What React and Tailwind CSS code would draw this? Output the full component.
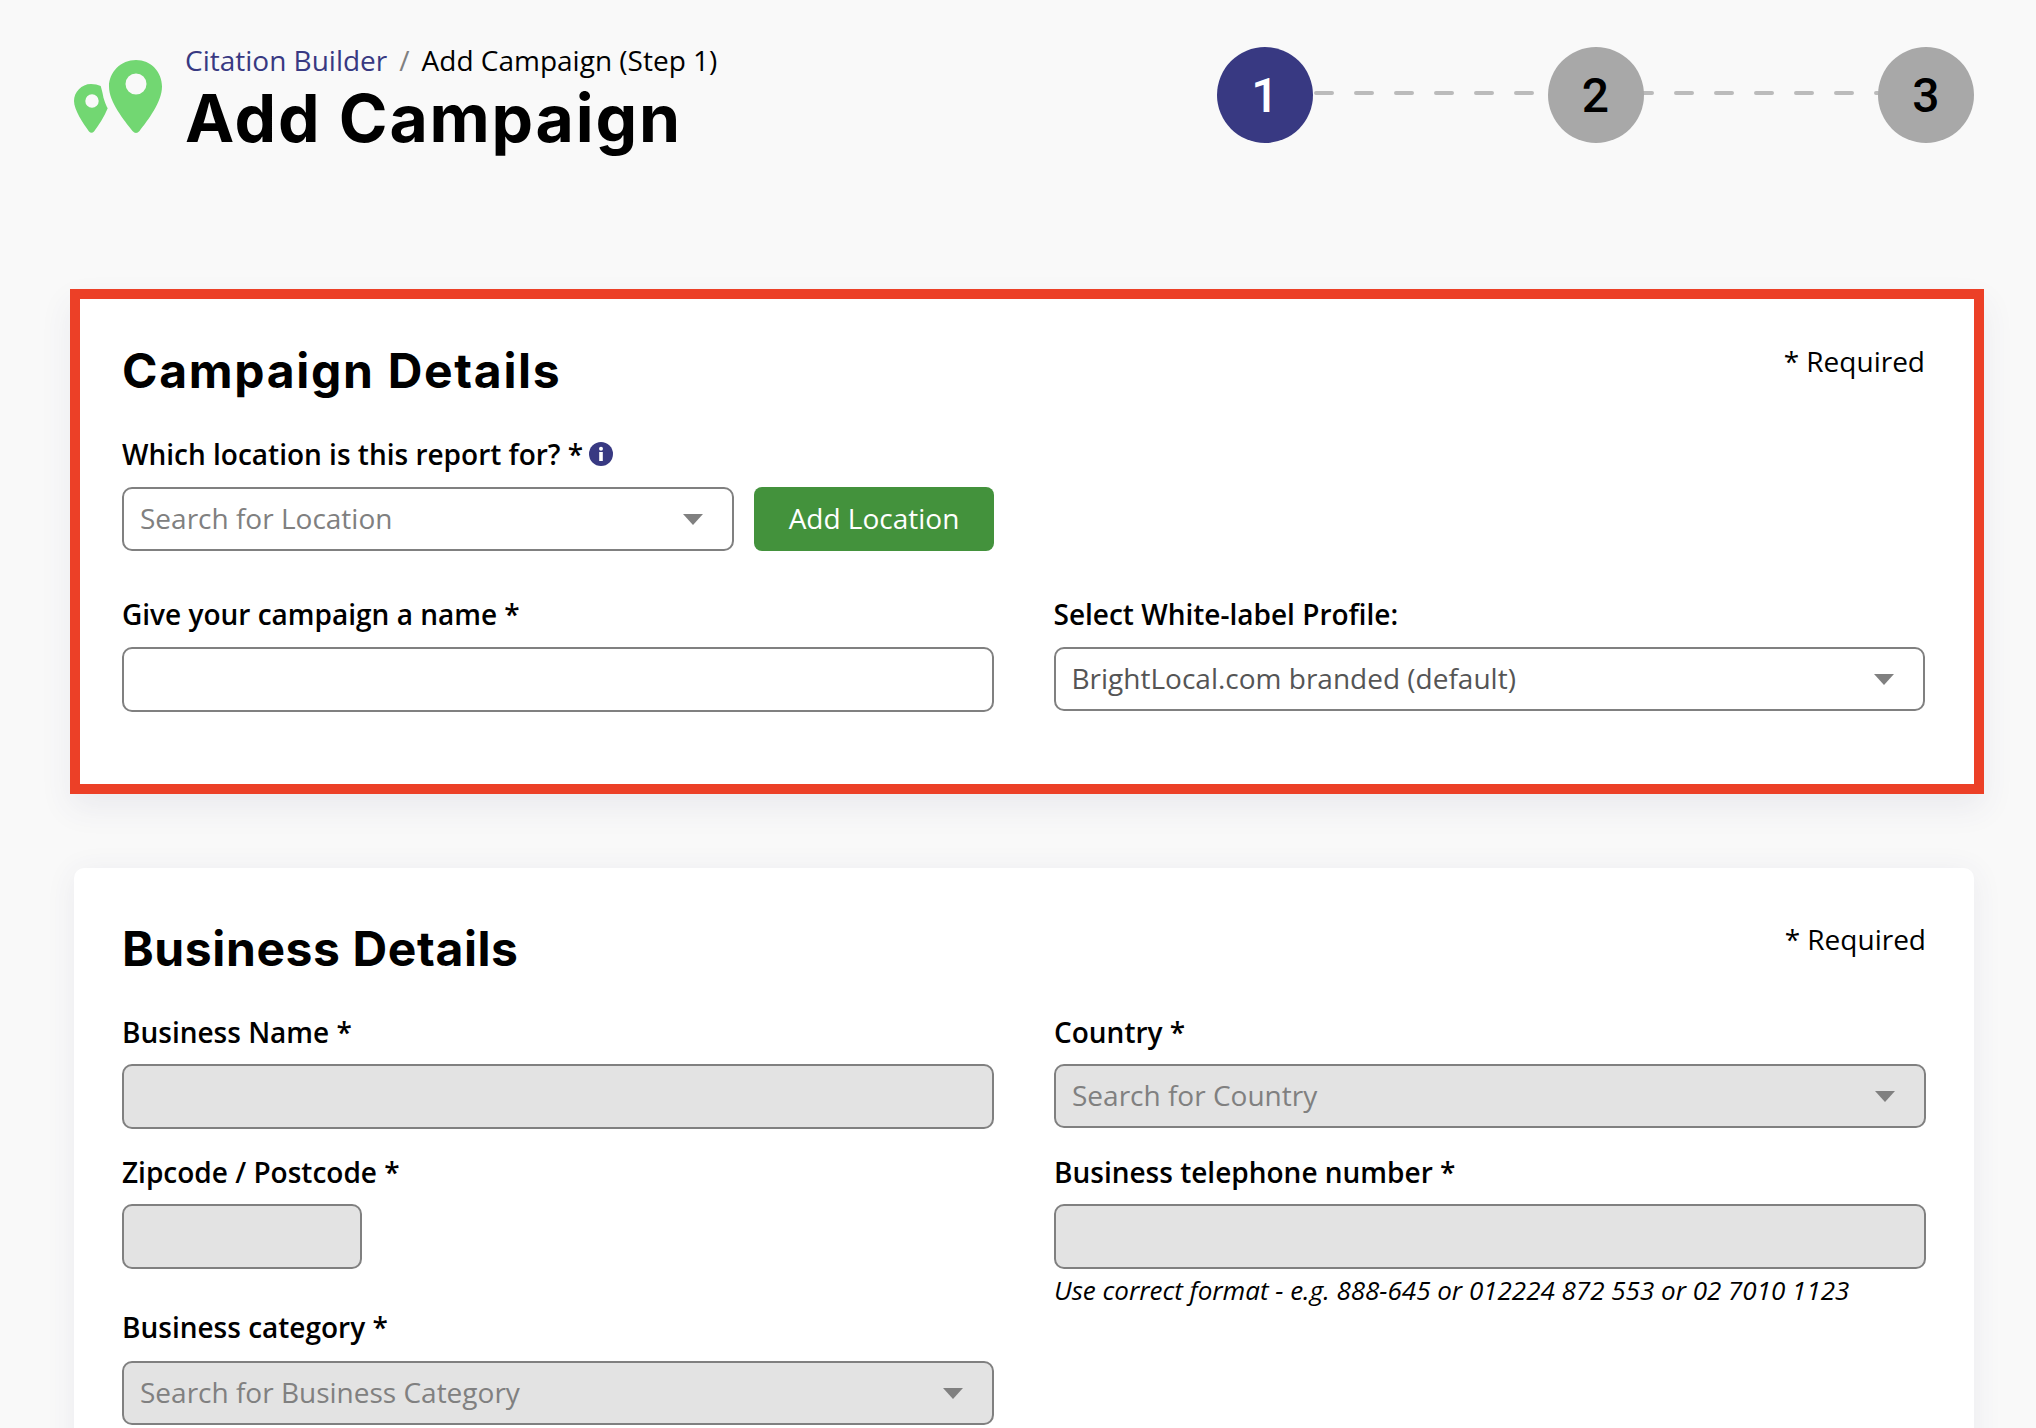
const openSans = "font-['Open_Sans',sans-serif]";

function Logo() {
  return (
    <svg width="88" height="74" viewBox="0 0 88 74" className="mt-[13px] shrink-0">
      <path
        fill="#72d772"
        fillRule="evenodd"
        d="M62 0C47 0 35 12 35 26.5C35 42 50 60 58.5 71Q62 75 65.5 71C74 60 88 42 88 26.5C88 12 77 0 62 0ZM62 13.5a10.5 10.5 0 1 1 0 21a10.5 10.5 0 1 1 0-21Z"
      />
      <path
        fill="#72d772"
        fillRule="evenodd"
        d="M17 24C7.5 24 0 32 0 41C0 50 9 63 15 71.5Q17.5 74 20 71.5C25 65 30 57 33.7 48.3C31 43 29.5 38 29.3 36.7C28.5 32 27.5 29 26.7 26C24 24.7 20.5 24 17 24ZM18 34.3a6.7 6.7 0 1 1 0 13.4a6.7 6.7 0 1 1 0-13.4Z"
      />
    </svg>
  );
}

function Steps() {
  return (
    <div className="relative flex w-[757px] justify-between">
      <svg width="757" height="6" className="absolute left-0 top-[43px]">
        <line x1="99" y1="3" x2="661" y2="3" stroke="#bbbbbb" strokeWidth="4" strokeLinecap="round" strokeDasharray="16 24" />
      </svg>
      <div className="relative flex h-[96px] w-[96px] items-center justify-center rounded-full bg-[#383982] pt-0.5 font-['Roboto',sans-serif] text-[48px] font-medium text-white">1</div>
      <div className="relative flex h-[96px] w-[96px] items-center justify-center rounded-full bg-[#a8a8a8] pt-0.5 font-['Roboto',sans-serif] text-[48px] font-medium text-black">2</div>
      <div className="relative flex h-[96px] w-[96px] items-center justify-center rounded-full bg-[#a8a8a8] pt-0.5 font-['Roboto',sans-serif] text-[48px] font-medium text-black">3</div>
    </div>
  );
}

function Arrow() {
  return (
    <svg width="20" height="11" viewBox="0 0 20 11" className="shrink-0">
      <polygon points="0,0 20,0 10,11" fill="#808080" />
    </svg>
  );
}

// fake select, the real one has a search box inside
function Select({ text, disabled, dark, className = 'w-full' }) {
  return (
    <div className={`flex h-[64px] items-center justify-between rounded-[10px] border-2 border-[#808080] pl-4 pr-[29px] text-[28px] ${disabled ? 'bg-[#e3e3e3]' : 'bg-white'} ${dark ? 'text-[#555555]' : 'text-[#808080]'} ${className}`}>
      <span className="-mt-0.5">{text}</span>
      <Arrow />
    </div>
  );
}

function TextInput({ disabled, className = 'w-full' }) {
  return (
    <input
      type="text"
      disabled={disabled}
      className={`block h-[65px] rounded-[10px] border-2 border-[#808080] ${disabled ? 'bg-[#e3e3e3]' : 'bg-white'} ${className}`}
    />
  );
}

function Label({ children }) {
  return <label className="block h-8 text-[28px] font-semibold leading-8 text-black">{children}</label>;
}

function CardHeader({ title, tracking }) {
  return (
    <div className="flex items-start justify-between">
      <h2 className={`font-['Inter',sans-serif] text-[48px] font-bold leading-[60px] text-black ${tracking}`}>{title}</h2>
      <span className="text-[28px] leading-[40px] text-black">* Required</span>
    </div>
  );
}

export default function App() {
  return (
    <div className={`h-[1428px] w-full overflow-hidden bg-[#f9f9f9] pl-[74px] pr-[62px] ${openSans}`}>
      <header className="flex items-start justify-between pt-[47px]">
        <div className="flex gap-[23px]">
          <Logo />
          <div className="-mt-[3px]">
            <div className="flex h-8 items-center text-[28px] leading-8">
              <a className="text-[#383982]">Citation Builder</a>
              <span className="mx-3 text-[#808080]">/</span>
              <span className="text-black">Add Campaign (Step 1)</span>
            </div>
            <h1 className="mt-1 font-['Inter',sans-serif] text-[66px] font-bold leading-[76px] tracking-[1.8px] text-black">Add Campaign</h1>
          </div>
        </div>
        <Steps />
      </header>

      <section className="-ml-1 -mr-2.5 mt-[133px] border-[10px] border-[#ec4027] bg-white pb-[72px] pl-[42px] pr-[49px] pt-[42px] shadow-[0_14px_30px_rgba(70,70,110,0.08)]">
        <CardHeader title="Campaign Details" tracking="tracking-[1.7px]" />
        <div className="mt-[37px] flex h-8 items-center gap-1.5">
          <Label>Which location is this report for? *</Label>
          <svg width="24" height="24" viewBox="0 0 24 24" className="shrink-0">
            <circle cx="12" cy="12" r="12" fill="#383982" />
            <circle cx="12" cy="6.8" r="2" fill="#fff" />
            <rect x="10.2" y="10" width="3.6" height="9" fill="#fff" />
          </svg>
        </div>
        <div className="mt-[17px] flex gap-5">
          <Select text="Search for Location" className="w-[612px]" />
          <button className="h-[64px] w-[240px] rounded-[8px] bg-[#43923c] pb-0.5 text-[28px] text-white">Add Location</button>
        </div>
        <div className="mt-[47px] grid grid-cols-2 gap-x-[60px]">
          <div>
            <Label>Give your campaign a name *</Label>
            <div className="mt-[17px]"><TextInput /></div>
          </div>
          <div>
            <Label>Select White-label Profile:</Label>
            <div className="mt-[17px]"><Select text="BrightLocal.com branded (default)" dark /></div>
          </div>
        </div>
      </section>

      <section className="mt-[74px] rounded-t-[10px] bg-white px-12 pb-10 pt-[51px] shadow-[0_4px_30px_rgba(70,70,110,0.08)]">
        <CardHeader title="Business Details" tracking="tracking-[0.6px]" />
        <div className="mt-[37px] grid grid-cols-2 gap-x-[60px]">
          <div>
            <Label>Business Name *</Label>
            <div className="mt-4"><TextInput disabled /></div>
            <div className="mt-[27px]"><Label>Zipcode / Postcode *</Label></div>
            <div className="mt-4"><TextInput disabled className="w-[240px]" /></div>
            <div className="mt-[42px]"><Label>Business category *</Label></div>
            <div className="mt-[18px]"><Select text="Search for Business Category" disabled /></div>
          </div>
          <div>
            <Label>Country *</Label>
            <div className="mt-4"><Select text="Search for Country" disabled /></div>
            <div className="mt-7"><Label>Business telephone number *</Label></div>
            <div className="mt-4"><TextInput disabled /></div>
            <p className="mt-[5px] text-[26px] italic leading-8 text-black">Use correct format - e.g. 888-645 or 012224 872 553 or 02 7010 1123</p>
          </div>
        </div>
      </section>
    </div>
  );
}
